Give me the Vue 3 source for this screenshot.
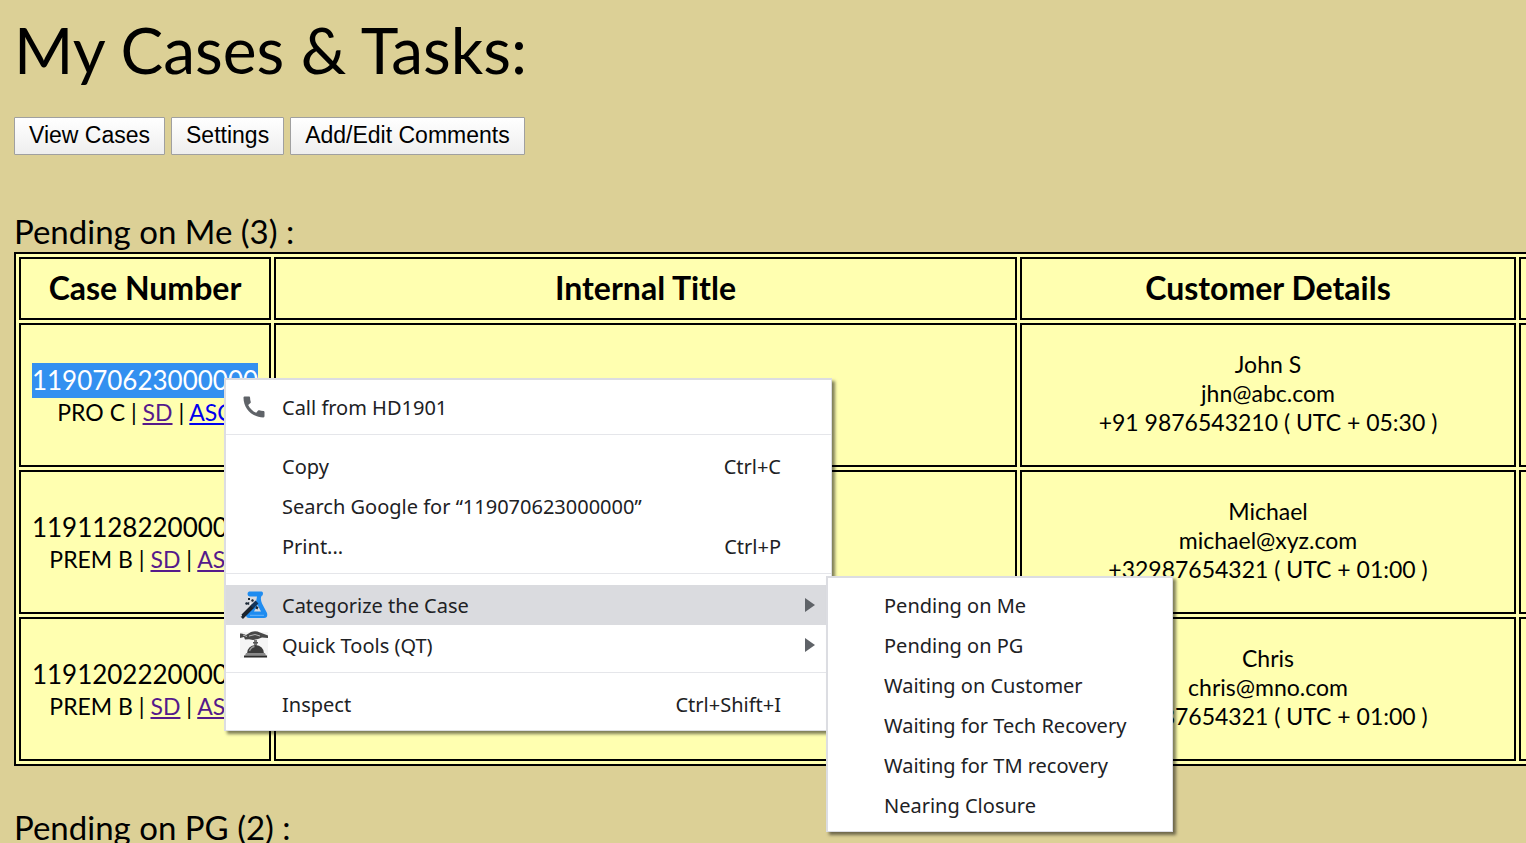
<script setup>
const actions = ['View Cases', 'Settings', 'Add/Edit Comments']

const cases = [
  {
    number: '119070623000000', plan: 'PRO C', link: 'ASC', selected: true, fresh: true,
    name: 'John S', email: 'jhn@abc.com', phone: '+91 9876543210 ( UTC + 05:30 )',
  },
  {
    number: '119112822000000', plan: 'PREM B', link: 'ASC',
    name: 'Michael', email: 'michael@xyz.com', phone: '+32987654321 ( UTC + 01:00 )',
  },
  {
    number: '119120222000000', plan: 'PREM B', link: 'ASC',
    name: 'Chris', email: 'chris@mno.com', phone: '+32987654321 ( UTC + 01:00 )',
  },
]

const menuGroups = [
  [{ label: 'Call from HD1901', icon: 'phone' }],
  [
    { label: 'Copy', keys: 'Ctrl+C' },
    { label: 'Search Google for “119070623000000”' },
    { label: 'Print...', keys: 'Ctrl+P' },
  ],
  [
    { label: 'Categorize the Case', icon: 'flask', arrow: true, active: true },
    { label: 'Quick Tools (QT)', icon: 'bell', arrow: true },
  ],
  [{ label: 'Inspect', keys: 'Ctrl+Shift+I' }],
]

const categories = [
  'Pending on Me',
  'Pending on PG',
  'Waiting on Customer',
  'Waiting for Tech Recovery',
  'Waiting for TM recovery',
  'Nearing Closure',
]
</script>

<template>
  <main class="page">
    <h1>My Cases &amp; Tasks:</h1>
    <div class="actions">
      <button v-for="a in actions" :key="a" type="button">{{ a }}</button>
    </div>

    <h2>Pending on Me (3) :</h2>
    <table>
      <colgroup>
        <col class="col-number" />
        <col />
        <col class="col-customer" />
        <col class="col-rest" />
      </colgroup>
      <thead>
        <tr>
          <th>Case Number</th>
          <th>Internal Title</th>
          <th>Customer Details</th>
          <th></th>
        </tr>
      </thead>
      <tbody>
        <tr v-for="c in cases" :key="c.number">
          <td>
            <div class="number"><span :class="{ selected: c.selected }">{{ c.number }}</span></div>
            <div class="plan">
              {{ c.plan }} | <a href="#">SD</a> | <a href="#" :class="{ fresh: c.fresh }">{{ c.link }}</a>
            </div>
          </td>
          <td></td>
          <td class="customer">
            <div>{{ c.name }}</div>
            <div>{{ c.email }}</div>
            <div>{{ c.phone }}</div>
          </td>
          <td></td>
        </tr>
      </tbody>
    </table>

    <h2>Pending on PG (2) :</h2>

    <div class="menu main-menu" role="menu">
      <div v-for="(group, g) in menuGroups" :key="g" class="group">
        <button
          v-for="item in group"
          :key="item.label"
          type="button"
          role="menuitem"
          :class="{ active: item.active }"
        >
          <span class="icon">
            <svg v-if="item.icon === 'phone'" viewBox="0 0 24 24">
              <path fill="#5f6368" d="M20.01 15.38c-1.23 0-2.42-.2-3.53-.56a.98.98 0 0 0-1.01.24l-1.57 1.97c-2.83-1.35-5.48-3.9-6.89-6.83l1.95-1.66c.27-.28.35-.67.24-1.02-.37-1.11-.56-2.3-.56-3.53 0-.54-.45-.99-.99-.99H4.19C3.65 3 3 3.24 3 3.99 3 13.28 10.73 21 20.01 21c.71 0 .99-.63.99-1.18v-3.45c0-.54-.45-.99-.99-.99z" />
            </svg>
            <svg v-else-if="item.icon === 'flask'" viewBox="0 0 28 28">
              <path fill="#1f8cf0" d="M9 .5h12.500q1.500 0 1.500 2t-1.500 2.500l-.5 1.500q-.5 2 1 6l5 9.500q1.200 5-3 5H9q-4-.5-2.500-4.500L13 14l3-3 1-5.500h-7.300Q7.500 5 7.500 3T9 .5z" />
              <path fill="#dadbdf" d="M17.500 14l3.500 6.500h-7z" />
              <path fill="#6bb4f8" d="M10 23.800h14v1H10z" />
              <path stroke="#1c232c" stroke-width="4" d="M1.500 26.500 13 15" />
              <path stroke="#14365c" stroke-width="4" d="M12 16l5-5" />
              <path fill="#1b2735" d="M8 7h2v2H8zM5 12l2-1 1 2-2 1zM11 9l2-1 1 2-2 1zM16 15l2.500 1-1 2.500-2-1zM8 11l2 1-1 2-2-1z" />
              <path fill="#f4f8fc" d="M10 11.500l1.500 1-1 1.500-1.500-1zM0 24.500l1.500-1 .5 1.500-1.500 1z" />
            </svg>
            <svg v-else-if="item.icon === 'bell'" viewBox="0 0 28 28">
              <path fill="#f5f5f5" d="M0 1h28v26H0z" />
              <path fill="#484848" d="M0 2.500q3-.5 6 1.500l5-3q5-1.500 9 .5l8 3v2.500l-6-.5-4 1.500-5 1-4-.7-4 .2L4 6 0 7z" />
              <path stroke="#b8b8b8" fill="none" d="M9 5l6-1.500 5 1.500M3 4l4 1.500" />
              <path fill="#777" d="M14 9h3v5.500h-3z" />
              <path fill="#555" d="M13 11h5v1.500h-5z" />
              <path fill="#3c3c3c" d="M7 22.500q.5-8 8.500-8.500 8 .5 8.500 8.500z" />
              <path stroke="#999" fill="none" stroke-width="1.300" d="M9.500 20q1.500-4 5-4.500" />
              <path fill="#8a8a8a" d="M6 22h19l1 2.500H5z" />
              <path fill="#2c2c2c" d="M4 24.500h23V26.500H4z" />
            </svg>
          </span>
          <span class="label">{{ item.label }}</span>
          <span v-if="item.keys" class="keys">{{ item.keys }}</span>
          <svg v-if="item.arrow" class="arrow" viewBox="0 0 10 14">
            <path fill="#5f6368" d="M0 0v14l10-7z" />
          </svg>
        </button>
      </div>

      <div class="menu submenu" role="menu">
        <button v-for="c in categories" :key="c" type="button" role="menuitem">{{ c }}</button>
      </div>
    </div>
  </main>
</template>

<style>
body {
  background: #dcd096;
}
</style>

<style scoped>
.page {
  position: relative;
  box-sizing: border-box;
  height: 100vh;
  padding-left: 14px;
  overflow: hidden;
  background: #dcd096;
  color: #000;
  font-family: Lato, "Gill Sans", sans-serif;
}

h1 {
  margin: 0;
  padding-top: 8px;
  font-size: 64px;
  font-weight: 400;
  line-height: 84px;
}

.actions {
  display: flex;
  gap: 6px;
  margin-top: 25px;
}

.actions button {
  height: 38px;
  padding: 0 14px 2px;
  border: 1px solid #a0a0a0;
  border-radius: 1px;
  background: linear-gradient(#fff, #eee);
  color: #000;
  font-family: "Liberation Sans", Arial, sans-serif;
  font-size: 23px;
  line-height: 34px;
}

h2 {
  margin: 56px 0 0;
  padding-bottom: 1px;
  font-size: 33px;
  font-weight: 400;
  line-height: 40px;
}

table {
  width: calc(100% + 300px);
  border: 2px solid #000;
  border-spacing: 3px;
  background: #ffffb0;
  table-layout: fixed;
}

table + h2 {
  margin-top: 41px;
}

.col-number {
  width: 252px;
}

.col-customer {
  width: 496px;
}

.col-rest {
  width: 302px;
}

th,
td {
  box-sizing: border-box;
  padding: 0 0 3px;
  border: 2px solid #000;
  text-align: center;
}

th {
  height: 63px;
  font-size: 32px;
  font-weight: 700;
}

td {
  height: 144px;
  padding-bottom: 1px;
  font-size: 23px;
  line-height: 29px;
  white-space: nowrap;
}

td.customer {
  padding-bottom: 4px;
}

.number {
  font-size: 26px;
  line-height: 35px;
}

.number span {
  display: inline-block;
}

.number .selected {
  background: #3390f0;
  color: #fff;
}

a {
  color: #551a8b;
}

a.fresh {
  color: #00e;
}

.menu {
  position: absolute;
  box-sizing: border-box;
  border: 2px solid #dcdde2;
  border-right-width: 1px;
  border-bottom-width: 1px;
  background: #fff;
  box-shadow: 3px 3px 3px rgba(0, 0, 0, 0.5);
  font-family: "Noto Sans", "Segoe UI", sans-serif;
}

.main-menu {
  top: 378px;
  left: 224px;
  width: 608px;
  padding: 7px 0 6px;
}

.submenu {
  top: 196px;
  left: 600px;
  width: 347px;
  padding: 7px 0 6px;
}

.group + .group {
  margin-top: 7px;
  padding-top: 11px;
  border-top: 1px solid #e5e6ea;
}

.group:last-of-type {
  padding-top: 12px;
}

.menu button {
  display: flex;
  align-items: center;
  width: 100%;
  height: 40px;
  padding: 0 16px 0 14px;
  border: 0;
  background: none;
  color: #202124;
  font-family: inherit;
  font-size: 20px;
  text-align: left;
  white-space: nowrap;
}

.menu .submenu button {
  padding-left: 56px;
}

.menu button.active {
  background: #dadbdf;
}

.icon {
  width: 28px;
  height: 28px;
  margin-right: 14px;
}

.icon svg {
  display: block;
  width: 28px;
  height: 28px;
}

.label {
  flex: 1;
}

.keys {
  margin-right: 34px;
}

.arrow {
  width: 10px;
  height: 14px;
}
</style>
